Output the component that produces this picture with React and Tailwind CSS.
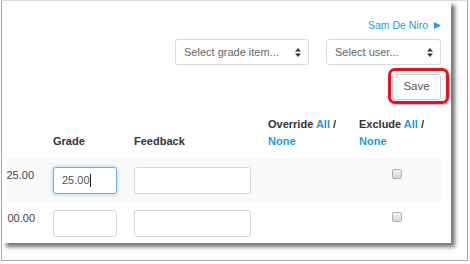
function Arrows() {
  return (
    <svg width="6" height="9" viewBox="0 0 6 9" className="shrink-0">
      <path d="M0 3.6 L3 0 L6 3.6 Z" fill="#333" />
      <path d="M0 5.4 L3 9 L6 5.4 Z" fill="#333" />
    </svg>
  );
}

function Select({ w, text }) {
  return (
    <div
      className={`${w} h-[26px] border border-[#d9d9d9] rounded-[3px] bg-white flex items-center justify-between pl-[8px] pr-[7px] text-[11px] text-[#666]`}
    >
      <span>{text}</span>
      <Arrows />
    </div>
  );
}

function Checkbox() {
  return (
    <div className="w-[10px] h-[10px] rounded-[2px] border border-[#b0b0b0] bg-linear-to-b from-[#f6f6f6] to-[#d6d6d6]" />
  );
}

export default function App() {
  return (
    <div className="w-[470px] h-[264px] bg-white pl-px overflow-hidden font-['Liberation_Sans',Arial,sans-serif]">
      <div className="w-[467px] h-[261px] border border-[#a8a8a8] border-t-[#dedede] bg-white">
        <div className="w-[449px] h-[242px] bg-white shadow-[4px_4px_4px_rgba(0,0,0,0.55)] flex flex-col overflow-hidden">
          <div className="flex flex-col items-end pr-[10px]">
            <div className="mt-[18px] h-[12px] flex items-center gap-[6px] text-[10.5px] leading-[12px] text-[#1a9ddb]">
              <span>Sam De Niro</span>
              <svg width="7" height="7" viewBox="0 0 7 7">
                <path d="M0 0 L7 3.5 L0 7 Z" fill="#1a9ddb" />
              </svg>
            </div>
            <div className="mt-[8px] flex gap-[17px]">
              <Select w="w-[134px]" text="Select grade item..." />
              <Select w="w-[115px]" text="Select user..." />
            </div>
            <div className="mt-[9px] relative">
              <div className="w-[49px] h-[26px] border border-[#cfcfcf] rounded-[3px] bg-white flex items-center justify-center text-[11.5px] text-[#555]">
                Save
              </div>
              <div className="absolute left-[-4px] top-[-6px] w-[61px] h-[36px] border-[3px] border-[#e3131b] rounded-[7px] shadow-[1px_1px_2px_rgba(0,0,0,0.35)]" />
            </div>
          </div>
          <div className="mt-[8px] ml-[5px] h-px bg-[#ececec]" />
          <div className="ml-[5px] w-[435px] flex flex-col text-[11px]">
            <div className="h-[50px] flex font-bold text-[#333] leading-[17px]">
              <div className="w-[38px]" />
              <div className="w-[81px] pl-[8px] pb-[8px] flex items-end">Grade</div>
              <div className="w-[134px] pl-[8px] pb-[8px] flex items-end">Feedback</div>
              <div className="w-[91px] pl-[8px] pb-[8px] flex flex-col justify-end">
                <span>
                  Override <span className="text-[#1a9ddb]">All</span> /
                </span>
                <span className="text-[#1a9ddb]">None</span>
              </div>
              <div className="w-[91px] pl-[8px] pb-[8px] flex flex-col justify-end">
                <span>
                  Exclude <span className="text-[#1a9ddb]">All</span> /
                </span>
                <span className="text-[#1a9ddb]">None</span>
              </div>
            </div>
            <div className="h-[44px] flex bg-[#f9f9f9] text-[#444]">
              <div className="w-[38px] pt-[10px] pr-[11px] flex justify-end leading-[14px] whitespace-nowrap">
                25.00
              </div>
              <div className="w-[81px] pl-[8px] pt-[9px]">
                <div className="w-[64px] h-[27px] border border-[#66afe9] rounded-[3px] bg-white shadow-[0_0_4px_rgba(102,175,233,0.6)] flex items-center pl-[8px] text-[#555]">
                  <span>25.00</span>
                  <span className="w-px h-[13px] bg-[#222]" />
                </div>
              </div>
              <div className="w-[134px] pl-[8px] pt-[9px]">
                <div className="w-[117px] h-[27px] border border-[#d6d6d6] rounded-[3px] bg-white" />
              </div>
              <div className="w-[91px]" />
              <div className="w-[91px] pt-[11px] flex justify-center">
                <Checkbox />
              </div>
            </div>
            <div className="h-[44px] flex bg-white text-[#444]">
              <div className="w-[38px] pt-[9px] pr-[10px] flex justify-end leading-[14px] whitespace-nowrap">
                00.00
              </div>
              <div className="w-[81px] pl-[8px] pt-[8px]">
                <div className="w-[64px] h-[27px] border border-[#d6d6d6] rounded-[3px] bg-white" />
              </div>
              <div className="w-[134px] pl-[8px] pt-[8px]">
                <div className="w-[117px] h-[27px] border border-[#d6d6d6] rounded-[3px] bg-white" />
              </div>
              <div className="w-[91px]" />
              <div className="w-[91px] pt-[10px] flex justify-center">
                <Checkbox />
              </div>
            </div>
          </div>
        </div>
      </div>
    </div>
  );
}
